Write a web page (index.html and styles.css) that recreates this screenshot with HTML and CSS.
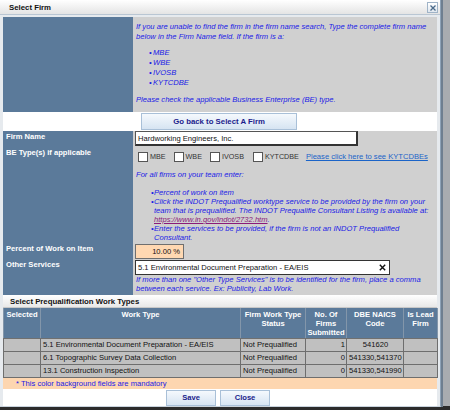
FILE: index.html
```html
<!DOCTYPE html>
<html>
<head>
<meta charset="utf-8">
<link rel="stylesheet" href="styles.css">
</head>
<body>
<div class="screen">
  <div class="dialog">
    <div class="titlebar">
      <span class="title">Select Firm</span>
      <span class="close-btn"><svg width="8" height="8" viewBox="0 0 8 8"><path d="M1.5 1.5 L6.5 6.5 M6.5 1.5 L1.5 6.5" stroke="#4a6a8a" stroke-width="1.3"/></svg></span>
    </div>
    <div class="form">
      <div class="lab row-intro"></div>
      <div class="val row-intro">
        <p class="intro">If you are unable to find the firm in the firm name search, Type the complete firm name below in the Firm Name field. If the firm is a:</p>
        <ul class="list10">
          <li>MBE</li>
          <li>WBE</li>
          <li>IVOSB</li>
          <li>KYTCDBE</li>
        </ul>
        <p class="intro">Please check the applicable Business Enterprise (BE) type.</p>
      </div>
      <div class="lab white row-back"></div>
      <div class="val white row-back"><span class="btn back">Go back to Select A Firm</span></div>

      <div class="lab row-firm">Firm Name</div>
      <div class="val row-firm"><div class="input firm">Hardworking Engineers, Inc.</div></div>

      <div class="lab row-be">BE Type(s) if applicable</div>
      <div class="val row-be">
        <div class="checks">
          <span class="chk"><span class="box"></span>MBE</span>
          <span class="chk"><span class="box"></span>WBE</span>
          <span class="chk"><span class="box"></span>IVOSB</span>
          <span class="chk"><span class="box"></span>KYTCDBE</span>
          <span class="link">Please click here to see KYTCDBEs</span>
        </div>
      </div>

      <div class="lab row-ins"></div>
      <div class="val row-ins">
        <p class="intro">For all firms on your team enter:</p>
        <ul class="list9">
          <li>Percent of work on item</li>
          <li>Click the INDOT Prequalified worktype service to be provided by the firm on your team that is prequalified. The INDOT Prequalifie Consultant Listing is available at: <span class="plink">https://www.in.gov/indot/2732.htm</span>.</li>
          <li>Enter the services to be provided, if the firm is not an INDOT Prequalified Consultant.</li>
        </ul>
      </div>

      <div class="lab row-pct">Percent of Work on Item</div>
      <div class="val row-pct"><div class="input pct">10.00 %</div></div>

      <div class="lab row-other">Other Services</div>
      <div class="val row-other">
        <div class="input other"><span>5.1 Environmental Document Preparation - EA/EIS</span><svg width="7" height="7" viewBox="0 0 7 7"><path d="M0.8 0.8 L6.2 6.2 M6.2 0.8 L0.8 6.2" stroke="#111" stroke-width="1.4"/></svg></div>
        <p class="note">If more than one "Other Type Services" is to be identified for the firm, place a comma between each service. Ex: Publicity, Lab Work.</p>
      </div>
    </div>

    <div class="section">Select Prequalification Work Types</div>
    <table class="grid">
      <thead>
        <tr>
          <th class="c1">Selected</th>
          <th class="c2">Work Type</th>
          <th class="c3">Firm Work Type<br>Status</th>
          <th class="c4">No. Of<br>Firms<br>Submitted</th>
          <th class="c5">DBE NAICS<br>Code</th>
          <th class="c6">Is Lead<br>Firm</th>
        </tr>
      </thead>
      <tbody>
        <tr><td></td><td>5.1 Environmental Document Preparation - EA/EIS</td><td>Not Prequalified</td><td class="num">1</td><td class="ctr">541620</td><td></td></tr>
        <tr><td></td><td>6.1 Topographic Survey Data Collection</td><td>Not Prequalified</td><td class="num">0</td><td>541330,541370</td><td></td></tr>
        <tr><td></td><td>13.1 Construction Inspection</td><td>Not Prequalified</td><td class="num">0</td><td>541330,541990</td><td></td></tr>
      </tbody>
    </table>
    <div class="mandatory">* This color background fields are mandatory</div>
    <div class="footer">
      <span class="btn small">Save</span>
      <span class="btn small">Close</span>
    </div>
  </div>
</div>
</body>
</html>
```
FILE: styles.css
```css
*, *::before, *::after {
  box-sizing: border-box;
}
html, body {
  margin: 0;
  padding: 0;
}
body {
  font-family: "Liberation Sans", Arial, sans-serif;
  font-size: 7.6px;
}
.screen {
  width: 450px;
  height: 410px;
  overflow: hidden;
  background: linear-gradient(to bottom, #a9acb0 406px, #2c2c2c 406px);
}
.dialog {
  width: 441px;
  padding: 0 3px 0 3px;
  border-right: 1px solid #8ea2b6;
  border-bottom: 1px solid #c9d3dd;
  background: #e6eaee;
  box-shadow: 2px 0 0 #6f7f90;
  display: flex;
  flex-direction: column;
}
.dialog > * {
  flex-shrink: 0;
}
.titlebar {
  margin: 0 -3px 2px;
  height: 15px;
  border-bottom: 1px solid #b9c6d3;
  background: linear-gradient(to bottom, #ffffff, #e4e4e4);
  display: flex;
  align-items: center;
  justify-content: space-between;
  padding: 0 2px 0 9px;
}
.title {
  font-weight: bold;
  color: #111;
  font-size: 7.8px;
}
.close-btn {
  width: 11px;
  height: 11px;
  border: 1px solid #9fb3c7;
  background: linear-gradient(to bottom, #ffffff, #dfe7ef);
  display: flex;
  align-items: center;
  justify-content: center;
  margin-top: 1px;
}
.form {
  display: grid;
  grid-template-columns: 130px 304px;
}
.lab {
  background: #5b7a9a;
  color: #fff;
  font-weight: bold;
  padding: 1px 0 0 3px;
  line-height: 9px;
}
.val {
  background: #d0d0d0;
  color: #1a1ae6;
  font-style: italic;
  padding-left: 3px;
}
.white {
  background: #fff;
}
.row-intro { height: 95px; }
.row-back { height: 19px; }
.row-firm { height: 16px; }
.row-be { height: 19px; }
.row-ins { height: 77px; }
.row-pct { height: 16px; }
.row-other { height: 36px; }
.lab.row-intro, .lab.row-back, .lab.row-ins { padding: 0; }
.val.row-intro { padding-top: 5px; }
p { margin: 0; }
.intro {
  line-height: 10px;
}
ul {
  margin: 0;
  padding: 0;
  list-style: none;
}
ul li {
  position: relative;
  padding-left: 17px;
}
ul li::before {
  content: "\2022";
  position: absolute;
  left: 13px;
  top: 0;
}
.list10 {
  line-height: 10px;
  margin: 6px 0 7px;
}
.list9 {
  line-height: 9px;
  margin: 8px 0 0;
}
.list9 li { padding-left: 18px; }
.list9 li::before { left: 15px; }
.plink {
  color: #8a1a7a;
  text-decoration: underline;
}
.btn {
  display: inline-flex;
  align-items: center;
  justify-content: center;
  border: 1px solid #a9c0d8;
  background: linear-gradient(to bottom, #f5f9fd, #d6e4f2);
  color: #1c1c8c;
  font-weight: bold;
  font-style: normal;
}
.back {
  width: 156px;
  height: 17px;
  margin: 1px 0 0 5px;
  font-size: 7.8px;
}
.val.row-back { padding-left: 3px; }
.input {
  background: #fff;
  border: 1px solid #333;
  color: #111;
  font-style: normal;
  height: 15px;
  display: flex;
  align-items: center;
  padding: 0 2px;
}
.firm {
  width: 223px;
  border-width: 1px 2px 2px 1px;
  border-color: #555 #333 #333 #555;
}
.val.row-firm, .val.row-pct, .val.row-other { padding-left: 2px; }
.pct {
  width: 49px;
  margin-top: 1px;
  background: #ffd8b2;
  border-color: #6f6f6f;
  justify-content: flex-end;
  padding-right: 3px;
}
.other {
  width: 255px;
  margin-top: 1px;
  justify-content: space-between;
  padding-right: 3px;
  padding-left: 2px;
}
.note {
  line-height: 9px;
  padding-left: 1px;
}
.checks {
  display: flex;
  align-items: center;
  height: 17px;
  padding-top: 2px;
  font-style: normal;
  color: #333;
  padding-left: 2px;
  white-space: nowrap;
  font-size: 7.2px;
}
.chk {
  display: inline-flex;
  align-items: center;
  margin-right: 8px;
}
.chk:nth-child(3) { margin-right: 9px; }
.chk:nth-child(4) { margin-right: 7px; }
.box {
  width: 10px;
  height: 10px;
  border: 1px solid #555;
  background: #fff;
  margin-right: 2px;
}
.link {
  color: #1b64c8;
  text-decoration: underline;
  font-size: 7.6px;
}
.val.row-ins { padding-top: 4px; }
.section {
  height: 13px;
  background: linear-gradient(to bottom, #ffffff, #e8e8e8);
  border-bottom: 1px solid #c8c8c8;
  font-weight: bold;
  color: #111;
  display: flex;
  align-items: center;
  padding-left: 7px;
  font-size: 7.8px;
}
.grid {
  width: 434px;
  border-collapse: collapse;
  table-layout: fixed;
}
.grid th {
  background: #5b7a9a;
  color: #fff;
  font-weight: bold;
  height: 30px;
  vertical-align: top;
  line-height: 9px;
  padding: 2px 0 0;
  border-left: 1px solid #8396aa;
  border-right: 1px solid #8396aa;
  border-bottom: 1px solid #707070;
}
.grid .c1 { width: 37px; }
.grid .c2 { width: 200px; }
.grid .c3 { width: 65px; }
.grid .c4 { width: 41px; }
.grid .c5 { width: 57px; }
.grid .c6 { width: 34px; }
.grid td {
  background: #c0c0c0;
  color: #111;
  height: 13px;
  padding: 0 1px 0 2px;
  border: 1px solid #6e6e6e;
  white-space: nowrap;
  overflow: hidden;
  line-height: 11px;
}
.grid td.num { text-align: right; padding-right: 1px; }
.grid td.ctr { text-align: center; }
.mandatory {
  background: #fdd6b0;
  color: #1a1ae6;
  height: 11px;
  line-height: 11px;
  padding-left: 13px;
}
.footer {
  background: #fff;
  height: 17px;
  display: flex;
  justify-content: center;
  gap: 4px;
  padding-top: 1px;
  padding-right: 4px;
}
.small {
  width: 50px;
  height: 16px;
}
```
